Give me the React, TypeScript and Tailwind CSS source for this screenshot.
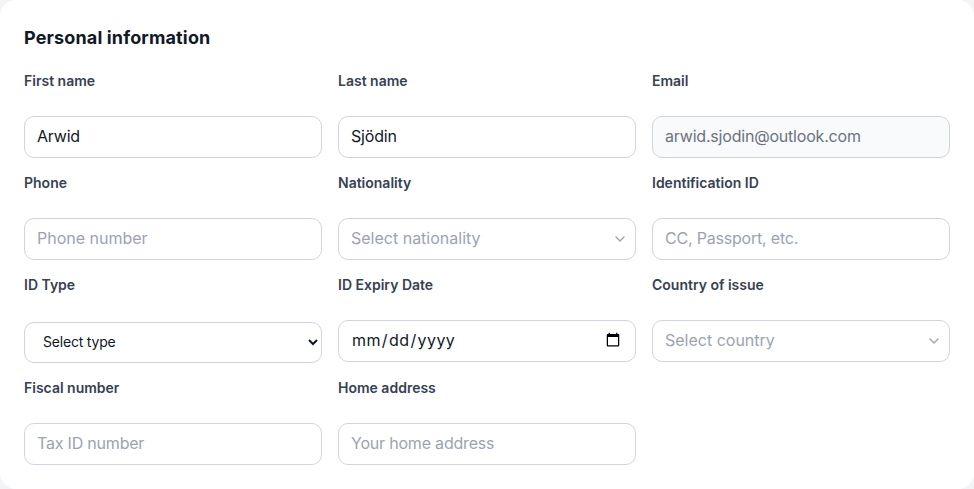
import { ReactNode } from 'react';

const inputBase =
  'block h-[42px] w-full rounded-[10px] border border-[#d1d5db] px-3 pb-[2px] text-base outline-none placeholder:text-[#9ca3af]';
const inputClass = `${inputBase} bg-white text-[#111827]`;
const tightInputClass = `${inputClass} tracking-[-0.2px]`;

function Field({ label, children }: { label: string; children: ReactNode }) {
  return (
    <div className="flex flex-col">
      <label className="mb-[25px] block text-sm leading-5 font-semibold text-[#374151]">{label}</label>
      {children}
    </div>
  );
}

function FakeSelect({ placeholder }: { placeholder: string }) {
  return (
    <div className="relative">
      <input readOnly placeholder={placeholder} className={inputClass} />
      <svg
        className="absolute top-1/2 right-2 h-4 w-4 -translate-y-1/2 text-[#9ca3af]"
        viewBox="0 0 24 24"
        fill="none"
        stroke="currentColor"
        strokeWidth="2"
        strokeLinecap="round"
        strokeLinejoin="round"
      >
        <path d="m6 9 6 6 6-6" />
      </svg>
    </div>
  );
}

export default function App() {
  return (
    <div className="h-[489px] overflow-hidden bg-[#f3f4f6] font-['Inter',sans-serif]">
      <section className="h-full rounded-2xl bg-white px-6 pt-[26px]">
        <h2 className="mb-[21px] text-lg leading-6 font-bold tracking-[0.15px] text-[#111827]">Personal information</h2>
        <div className="grid grid-cols-3 gap-x-4 gap-y-[15px]">
          <Field label="First name">
            <input defaultValue="Arwid" className={tightInputClass} />
          </Field>
          <Field label="Last name">
            <input defaultValue="Sjödin" className={tightInputClass} />
          </Field>
          <Field label="Email">
            <input
              readOnly
              value="arwid.sjodin@outlook.com"
              className={`${inputBase} bg-[#f9fafb] tracking-[-0.2px] text-[#6b7280]`}
            />
          </Field>

          <Field label="Phone">
            <input placeholder="Phone number" className={inputClass} />
          </Field>
          <Field label="Nationality">
            <FakeSelect placeholder="Select nationality" />
          </Field>
          <Field label="Identification ID">
            <input placeholder="CC, Passport, etc." className={tightInputClass} />
          </Field>

          <Field label="ID Type">
            <select className="mt-[2px] block h-[41px] w-full rounded-[10px] border border-[#d1d5db] bg-white pr-3 pb-[2px] pl-[14px] text-sm tracking-[-0.2px] text-[#111827] outline-none">
              <option>Select type</option>
            </select>
          </Field>
          <Field label="ID Expiry Date">
            <input type="date" className={`${inputClass} tracking-[0.4px]`} />
          </Field>
          <Field label="Country of issue">
            <FakeSelect placeholder="Select country" />
          </Field>

          <Field label="Fiscal number">
            <input placeholder="Tax ID number" className={tightInputClass} />
          </Field>
          <Field label="Home address">
            <input placeholder="Your home address" className={tightInputClass} />
          </Field>
        </div>
      </section>
    </div>
  );
}
